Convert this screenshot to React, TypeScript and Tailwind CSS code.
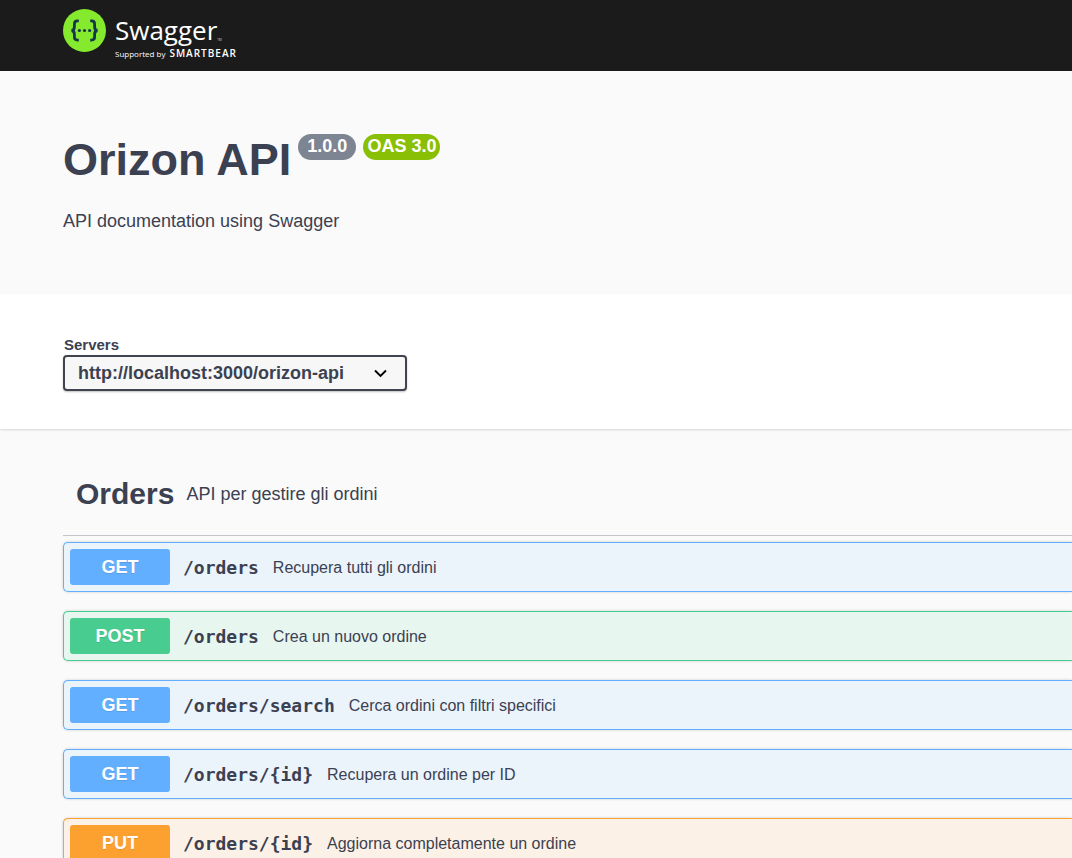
import React from "react";

type Method = "GET" | "POST" | "PUT";

interface Operation {
  method: Method;
  path: string;
  summary: string;
}

const operations: Operation[] = [
  { method: "GET", path: "/orders", summary: "Recupera tutti gli ordini" },
  { method: "POST", path: "/orders", summary: "Crea un nuovo ordine" },
  { method: "GET", path: "/orders/search", summary: "Cerca ordini con filtri specifici" },
  { method: "GET", path: "/orders/{id}", summary: "Recupera un ordine per ID" },
  { method: "PUT", path: "/orders/{id}", summary: "Aggiorna completamente un ordine" },
];

const blockStyles: Record<Method, string> = {
  GET: "border-[#61affe] bg-[#ebf3fb]",
  POST: "border-[#49cc90] bg-[#e8f6f0]",
  PUT: "border-[#fca130] bg-[#fbf1e6]",
};

const badgeStyles: Record<Method, string> = {
  GET: "bg-[#61affe]",
  POST: "bg-[#49cc90]",
  PUT: "bg-[#fca130]",
};

function Logo() {
  return (
    <a href="#" aria-label="Swagger" className="flex items-start gap-[9px] text-white">
      <svg width="43" height="43" viewBox="0 0 43 43" aria-hidden="true">
        <circle cx="21.5" cy="21.5" r="21.5" fill="#85ea2d" />
        <g fill="none" stroke="#173647" strokeWidth="2.8">
          <path d="M15.8 11.9h-1.4c-2.2 0-3 1.1-3 3v2.8c0 2.4-.8 3.6-2.9 3.8 2.1.2 2.9 1.4 2.9 3.8v2.8c0 1.9.8 3 3 3h1.4" />
          <path d="M27.2 11.9h1.4c2.2 0 3 1.1 3 3v2.8c0 2.4.8 3.6 2.9 3.8-2.1.2-2.9 1.4-2.9 3.8v2.8c0 1.9-.8 3-3 3h-1.4" />
        </g>
        <g fill="#173647">
          <circle cx="16.4" cy="21.5" r="1.6" />
          <circle cx="21.5" cy="21.5" r="1.6" />
          <circle cx="26.6" cy="21.5" r="1.6" />
        </g>
      </svg>
      <span className="flex flex-col font-['Open_Sans',sans-serif]">
        <span className="flex items-end">
          <span className="text-[26px] leading-[42px]">Swagger</span>
          <span className="pb-[9px] text-[3px] leading-none text-gray-300">TM</span>
        </span>
        <span className="-mt-0.5 flex items-baseline gap-1 leading-[8px]">
          <span className="text-[8px]">Supported by</span>
          <span className="text-[10px] font-semibold tracking-widest">SMARTBEAR</span>
        </span>
      </span>
    </a>
  );
}

function OperationRow({ method, path, summary }: Operation) {
  return (
    <button
      type="button"
      className={`flex h-[50px] w-full items-center rounded-l-[5px] border border-r-0 pl-1.5 text-left shadow-[0_0_3px_rgba(0,0,0,0.19)] ${blockStyles[method]}`}
    >
      <span
        className={`w-[100px] shrink-0 rounded-[3px] text-center text-lg font-bold leading-9 text-white [text-shadow:0_1px_0_rgba(0,0,0,0.1)] ${badgeStyles[method]}`}
      >
        {method}
      </span>
      <span className="ml-[13px] flex items-center gap-3.5 pt-0.5">
        <span className="font-['DejaVu_Sans_Mono',monospace] text-lg font-bold">{path}</span>
        <span className="text-base">{summary}</span>
      </span>
    </button>
  );
}

export default function App() {
  return (
    <div className="min-h-screen bg-[#fafafa] font-['Liberation_Sans',Arial,sans-serif] text-[#3b4151]">
      <header className="h-[71px] bg-[#1b1b1b] pl-[63px] pt-[9px]">
        <Logo />
      </header>

      <main>
        <section className="px-[63px] pb-[59px] pt-[63px]">
          <div className="flex items-start gap-[7px]">
            <h1 className="text-[45px] font-bold leading-[52px]">Orizon API</h1>
            <span className="rounded-full bg-[#7d8492] px-[9px] pb-0.5 text-lg font-bold leading-6 text-white">
              1.0.0
            </span>
            <span className="rounded-full bg-[#89bf04] px-1 pb-0.5 text-lg font-bold leading-6 text-white">
              OAS 3.0
            </span>
          </div>
          <p className="mt-[21px] text-lg leading-7">API documentation using Swagger</p>
        </section>

        <section className="bg-white px-[63px] pb-[38px] pt-[41px] shadow-[0_1px_2px_rgba(0,0,0,0.15)]">
          <label htmlFor="servers" className="block pl-px text-[15px] font-bold leading-5">
            Servers
          </label>
          <div className="relative w-[344px] max-w-full">
            <select
              id="servers"
              className="block h-9 w-full appearance-none rounded border-2 border-[#41444e] bg-[#f7f7f7] pl-[13px] pr-10 text-lg font-bold shadow-[0_1px_2px_rgba(0,0,0,0.25)]"
            >
              <option>http://localhost:3000/orizon-api</option>
            </select>
            <svg
              className="pointer-events-none absolute right-5 top-3"
              width="13"
              height="13"
              viewBox="0 0 13 13"
              fill="none"
              stroke="#000"
              strokeWidth="1.9"
              aria-hidden="true"
            >
              <path d="M1 3.5l5.5 5.5 5.5-5.5" />
            </svg>
          </div>
        </section>

        <section className="pl-[63px] pt-[26px]">
          <div className="flex items-center gap-3 border-b border-[#c3c5ca] pb-[21px] pl-[13px] pt-[19px]">
            <h2 className="text-3xl font-bold leading-10">Orders</h2>
            <p className="text-lg leading-10">API per gestire gli ordini</p>
          </div>
          <div className="flex flex-col gap-[19px] pb-5 pt-1.5">
            {operations.map((operation) => (
              <OperationRow key={`${operation.method} ${operation.path}`} {...operation} />
            ))}
          </div>
        </section>
      </main>
    </div>
  );
}
